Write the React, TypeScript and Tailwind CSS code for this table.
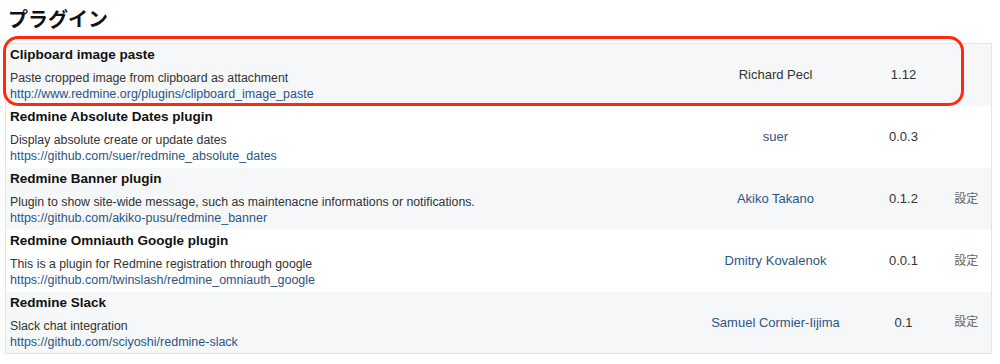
import React from "react";

type Plugin = {
  name: string;
  description: string;
  url: string;
  author: string;
  authorLink: boolean;
  version: string;
  configurable: boolean;
};

const plugins: Plugin[] = [
  {
    name: "Clipboard image paste",
    description: "Paste cropped image from clipboard as attachment",
    url: "http://www.redmine.org/plugins/clipboard_image_paste",
    author: "Richard Pecl",
    authorLink: false,
    version: "1.12",
    configurable: false,
  },
  {
    name: "Redmine Absolute Dates plugin",
    description: "Display absolute create or update dates",
    url: "https://github.com/suer/redmine_absolute_dates",
    author: "suer",
    authorLink: true,
    version: "0.0.3",
    configurable: false,
  },
  {
    name: "Redmine Banner plugin",
    description:
      "Plugin to show site-wide message, such as maintenacne informations or notifications.",
    url: "https://github.com/akiko-pusu/redmine_banner",
    author: "Akiko Takano",
    authorLink: true,
    version: "0.1.2",
    configurable: true,
  },
  {
    name: "Redmine Omniauth Google plugin",
    description: "This is a plugin for Redmine registration through google",
    url: "https://github.com/twinslash/redmine_omniauth_google",
    author: "Dmitry Kovalenok",
    authorLink: true,
    version: "0.0.1",
    configurable: true,
  },
  {
    name: "Redmine Slack",
    description: "Slack chat integration",
    url: "https://github.com/sciyoshi/redmine-slack",
    author: "Samuel Cormier-Iijima",
    authorLink: true,
    version: "0.1",
    configurable: true,
  },
];

export default function App() {
  return (
    <div
      className="h-[364px] w-[1000px] bg-white px-[5px] pt-[6px]"
      style={{ fontFamily: '"Liberation Sans", "Noto Sans CJK JP", sans-serif' }}
    >
      <h2 className="mb-[9px] pl-[3px] text-[20px] font-bold leading-[28px] text-[#111]">
        プラグイン
      </h2>

      <div className="relative">
        {/* highlight around first plugin */}
        <div className="pointer-events-none absolute left-[-2px] top-[-7px] h-[70px] w-[961px] rounded-[15px] border-[3px] border-[#ff2a0e]" />

        <table className="w-[987px] border-collapse border border-[#e4e4e4]">
          <tbody>
            {plugins.map((p, i) => (
              <tr
                key={p.name}
                className={i % 2 === 0 ? "h-[62px] bg-[#f6f7f9]" : "h-[62px] bg-white"}
              >
                <td className="px-[4px] align-top">
                  <div className="pt-[3px] text-[13.5px] font-bold leading-[16px] text-[#111]">
                    {p.name}
                  </div>
                  <div className="mt-[7px] text-[12.3px] leading-[16px] text-[#333]">
                    {p.description}
                  </div>
                  <div className="text-[12.5px] leading-[17px] text-[#2a5685]">
                    {p.url}
                  </div>
                </td>
                <td
                  className={
                    p.authorLink
                      ? "w-[180px] text-center text-[13px] text-[#2a5685]"
                      : "w-[180px] text-center text-[13px] text-[#333]"
                  }
                >
                  {p.author}
                </td>
                <td className="w-[76px] text-center text-[13px] text-[#333]">
                  {p.version}
                </td>
                <td className="w-[50px] text-center text-[12px] text-[#666]">
                  {p.configurable ? "設定" : ""}
                </td>
              </tr>
            ))}
          </tbody>
        </table>
      </div>
    </div>
  );
}
